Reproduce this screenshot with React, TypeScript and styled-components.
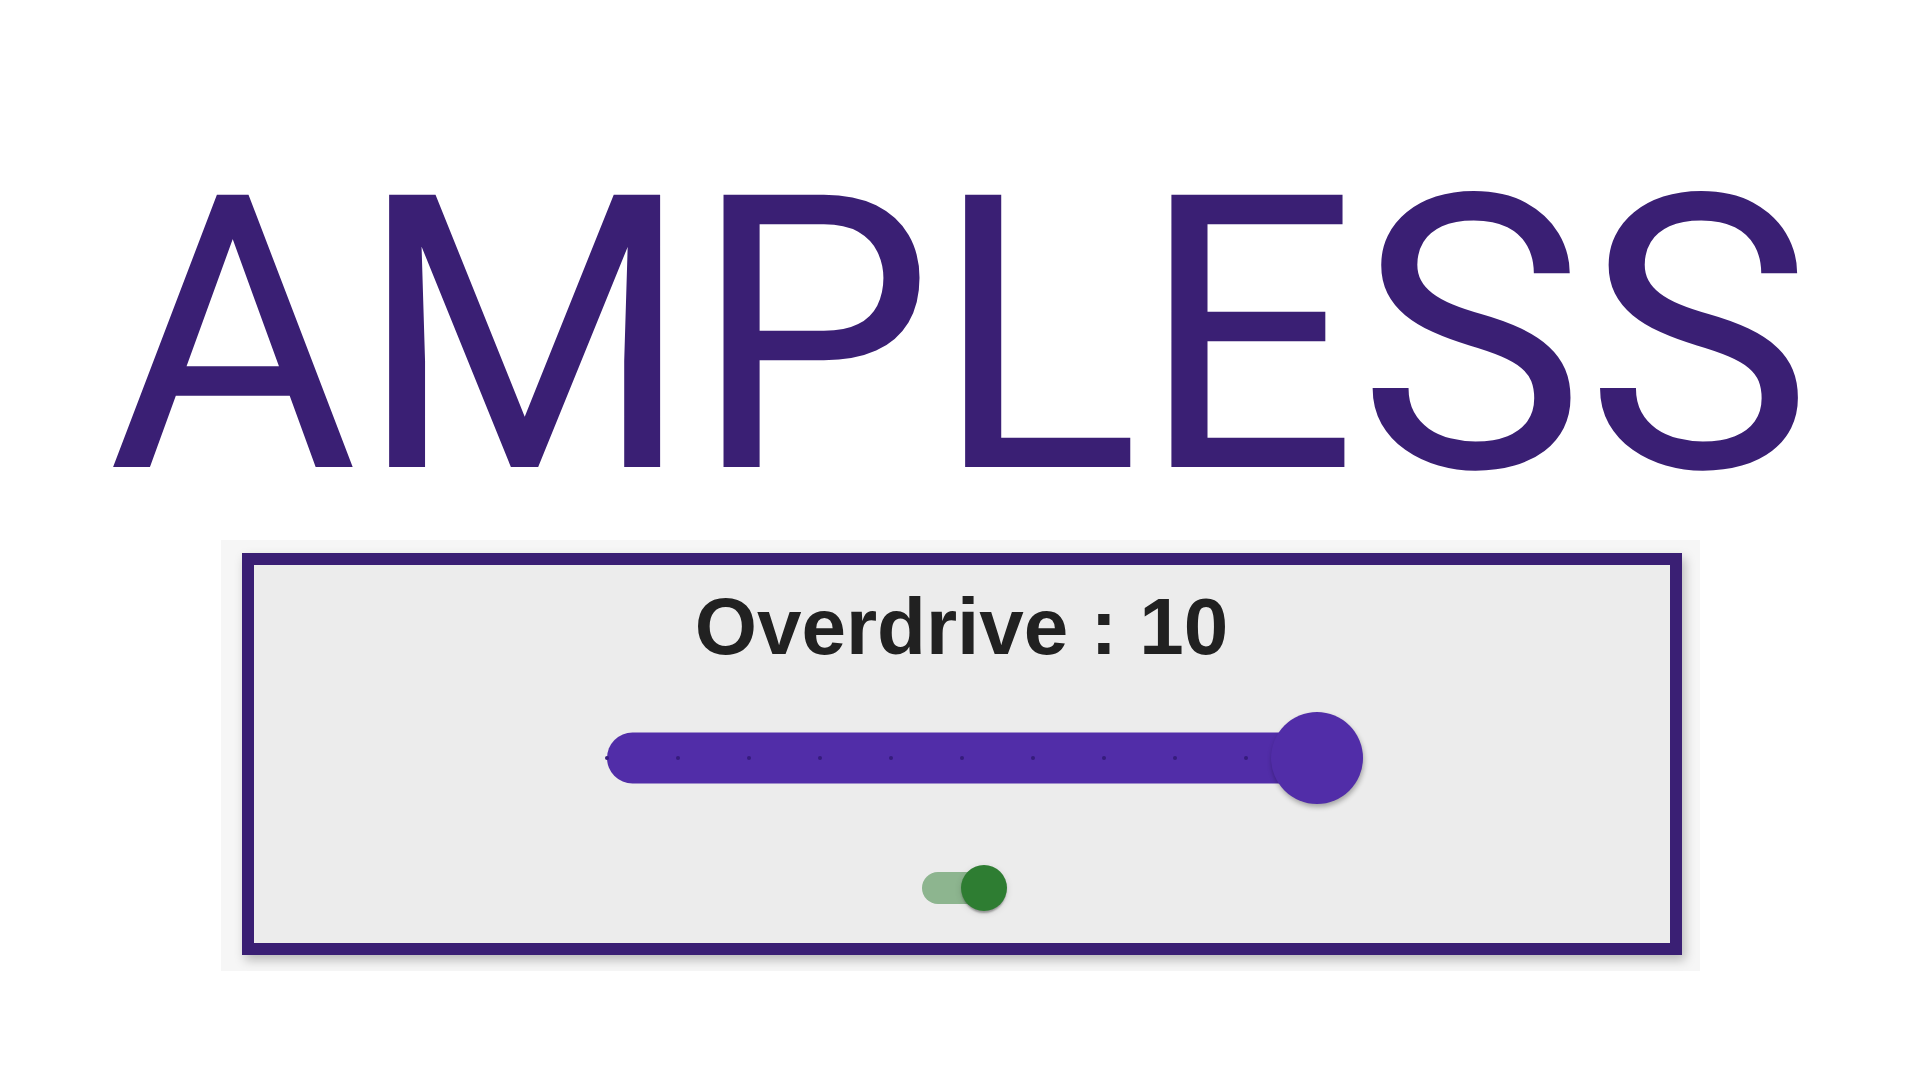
import React, { useState } from 'react';
import styled, { createGlobalStyle } from 'styled-components';

const GlobalStyle = createGlobalStyle`
  html, body {
    margin: 0;
    padding: 0;
    background: #ffffff;
  }
  body {
    font-family: Roboto, "Liberation Sans", sans-serif;
  }
`;

const Page = styled.main`
  width: 1920px;
  height: 1080px;
  box-sizing: border-box;
  overflow: hidden;
  padding-top: 146px;
  display: flex;
  flex-direction: column;
  align-items: center;
`;

const Title = styled.h1`
  margin: 0;
  font-family: Roboto, "Liberation Sans", sans-serif;
  font-weight: 400;
  font-size: 383px;
  line-height: 381px;
  color: #3a1f74;
`;

const Frame = styled.div`
  margin-top: 13px;
  padding: 13px 18px 16px 21px;
  background: #f6f6f6;
`;

const Card = styled.section`
  width: 1440px;
  height: 402px;
  box-sizing: border-box;
  border: 12px solid #3a1f74;
  background: #ececec;
  box-shadow: 3px 5px 10px rgba(0, 0, 0, 0.25);
  padding: 13px 0 11px;
  display: flex;
  flex-direction: column;
  align-items: center;
`;

const Label = styled.div`
  font-family: "Liberation Sans", Arial, sans-serif;
  font-weight: 700;
  font-size: 80px;
  line-height: 97px;
  color: #212121;
`;

const SliderRoot = styled.div`
  position: relative;
  margin-top: 37px;
  width: 710px;
  height: 92px;
`;

const Rail = styled.div`
  position: absolute;
  left: 0;
  right: 0;
  top: 50%;
  height: 51px;
  transform: translateY(-50%);
  border-radius: 26px;
  background: #512da8;
`;

const Mark = styled.span`
  position: absolute;
  top: 50%;
  width: 4px;
  height: 4px;
  border-radius: 50%;
  background: #361c7c;
  transform: translate(-50%, -50%);
`;

const Thumb = styled.span`
  position: absolute;
  top: 50%;
  width: 92px;
  height: 92px;
  border-radius: 50%;
  background: #512da8;
  transform: translate(-50%, -50%);
  box-shadow: 1px 3px 5px rgba(0, 0, 0, 0.3);
`;

const SwitchRoot = styled.button`
  position: relative;
  margin-top: 40px;
  width: 133px;
  height: 87px;
  padding: 0;
  border: none;
  background: transparent;
  cursor: pointer;
`;

const SwitchTrack = styled.span<{ $on: boolean }>`
  position: absolute;
  left: 27px;
  top: 27.5px;
  width: 79px;
  height: 32px;
  border-radius: 16px;
  background: ${(p) => (p.$on ? '#2e7d32' : '#000')};
  opacity: ${(p) => (p.$on ? 0.5 : 0.38)};
`;

const SwitchThumb = styled.span<{ $on: boolean }>`
  position: absolute;
  top: 20.5px;
  left: ${(p) => (p.$on ? '66.3px' : '20.5px')};
  width: 46px;
  height: 46px;
  border-radius: 50%;
  background: ${(p) => (p.$on ? '#2e7d32' : '#fafafa')};
  box-shadow: 0 4px 2px -2px rgba(0, 0, 0, 0.2), 0 2px 2px 0 rgba(0, 0, 0, 0.14),
    0 2px 7px 0 rgba(0, 0, 0, 0.12);
`;

const MIN = 0;
const MAX = 10;

export default function App() {
  const [value] = useState(10);
  const [on, setOn] = useState(true);
  const pct = ((value - MIN) / (MAX - MIN)) * 100;
  const marks = Array.from({ length: MAX - MIN + 1 }, (_, i) => i);

  return (
    <>
      <GlobalStyle />
      <Page>
        <Title>AMPLESS</Title>
        <Frame>
          <Card>
            <Label>Overdrive : {value}</Label>
            <SliderRoot>
              <Rail />
              {marks.map((m) => (
                <Mark key={m} style={{ left: `${(m / (MAX - MIN)) * 100}%` }} />
              ))}
              <Thumb style={{ left: `${pct}%` }} />
            </SliderRoot>
            <SwitchRoot aria-label="toggle" onClick={() => setOn(!on)}>
              <SwitchTrack $on={on} />
              <SwitchThumb $on={on} />
            </SwitchRoot>
          </Card>
        </Frame>
      </Page>
    </>
  );
}
